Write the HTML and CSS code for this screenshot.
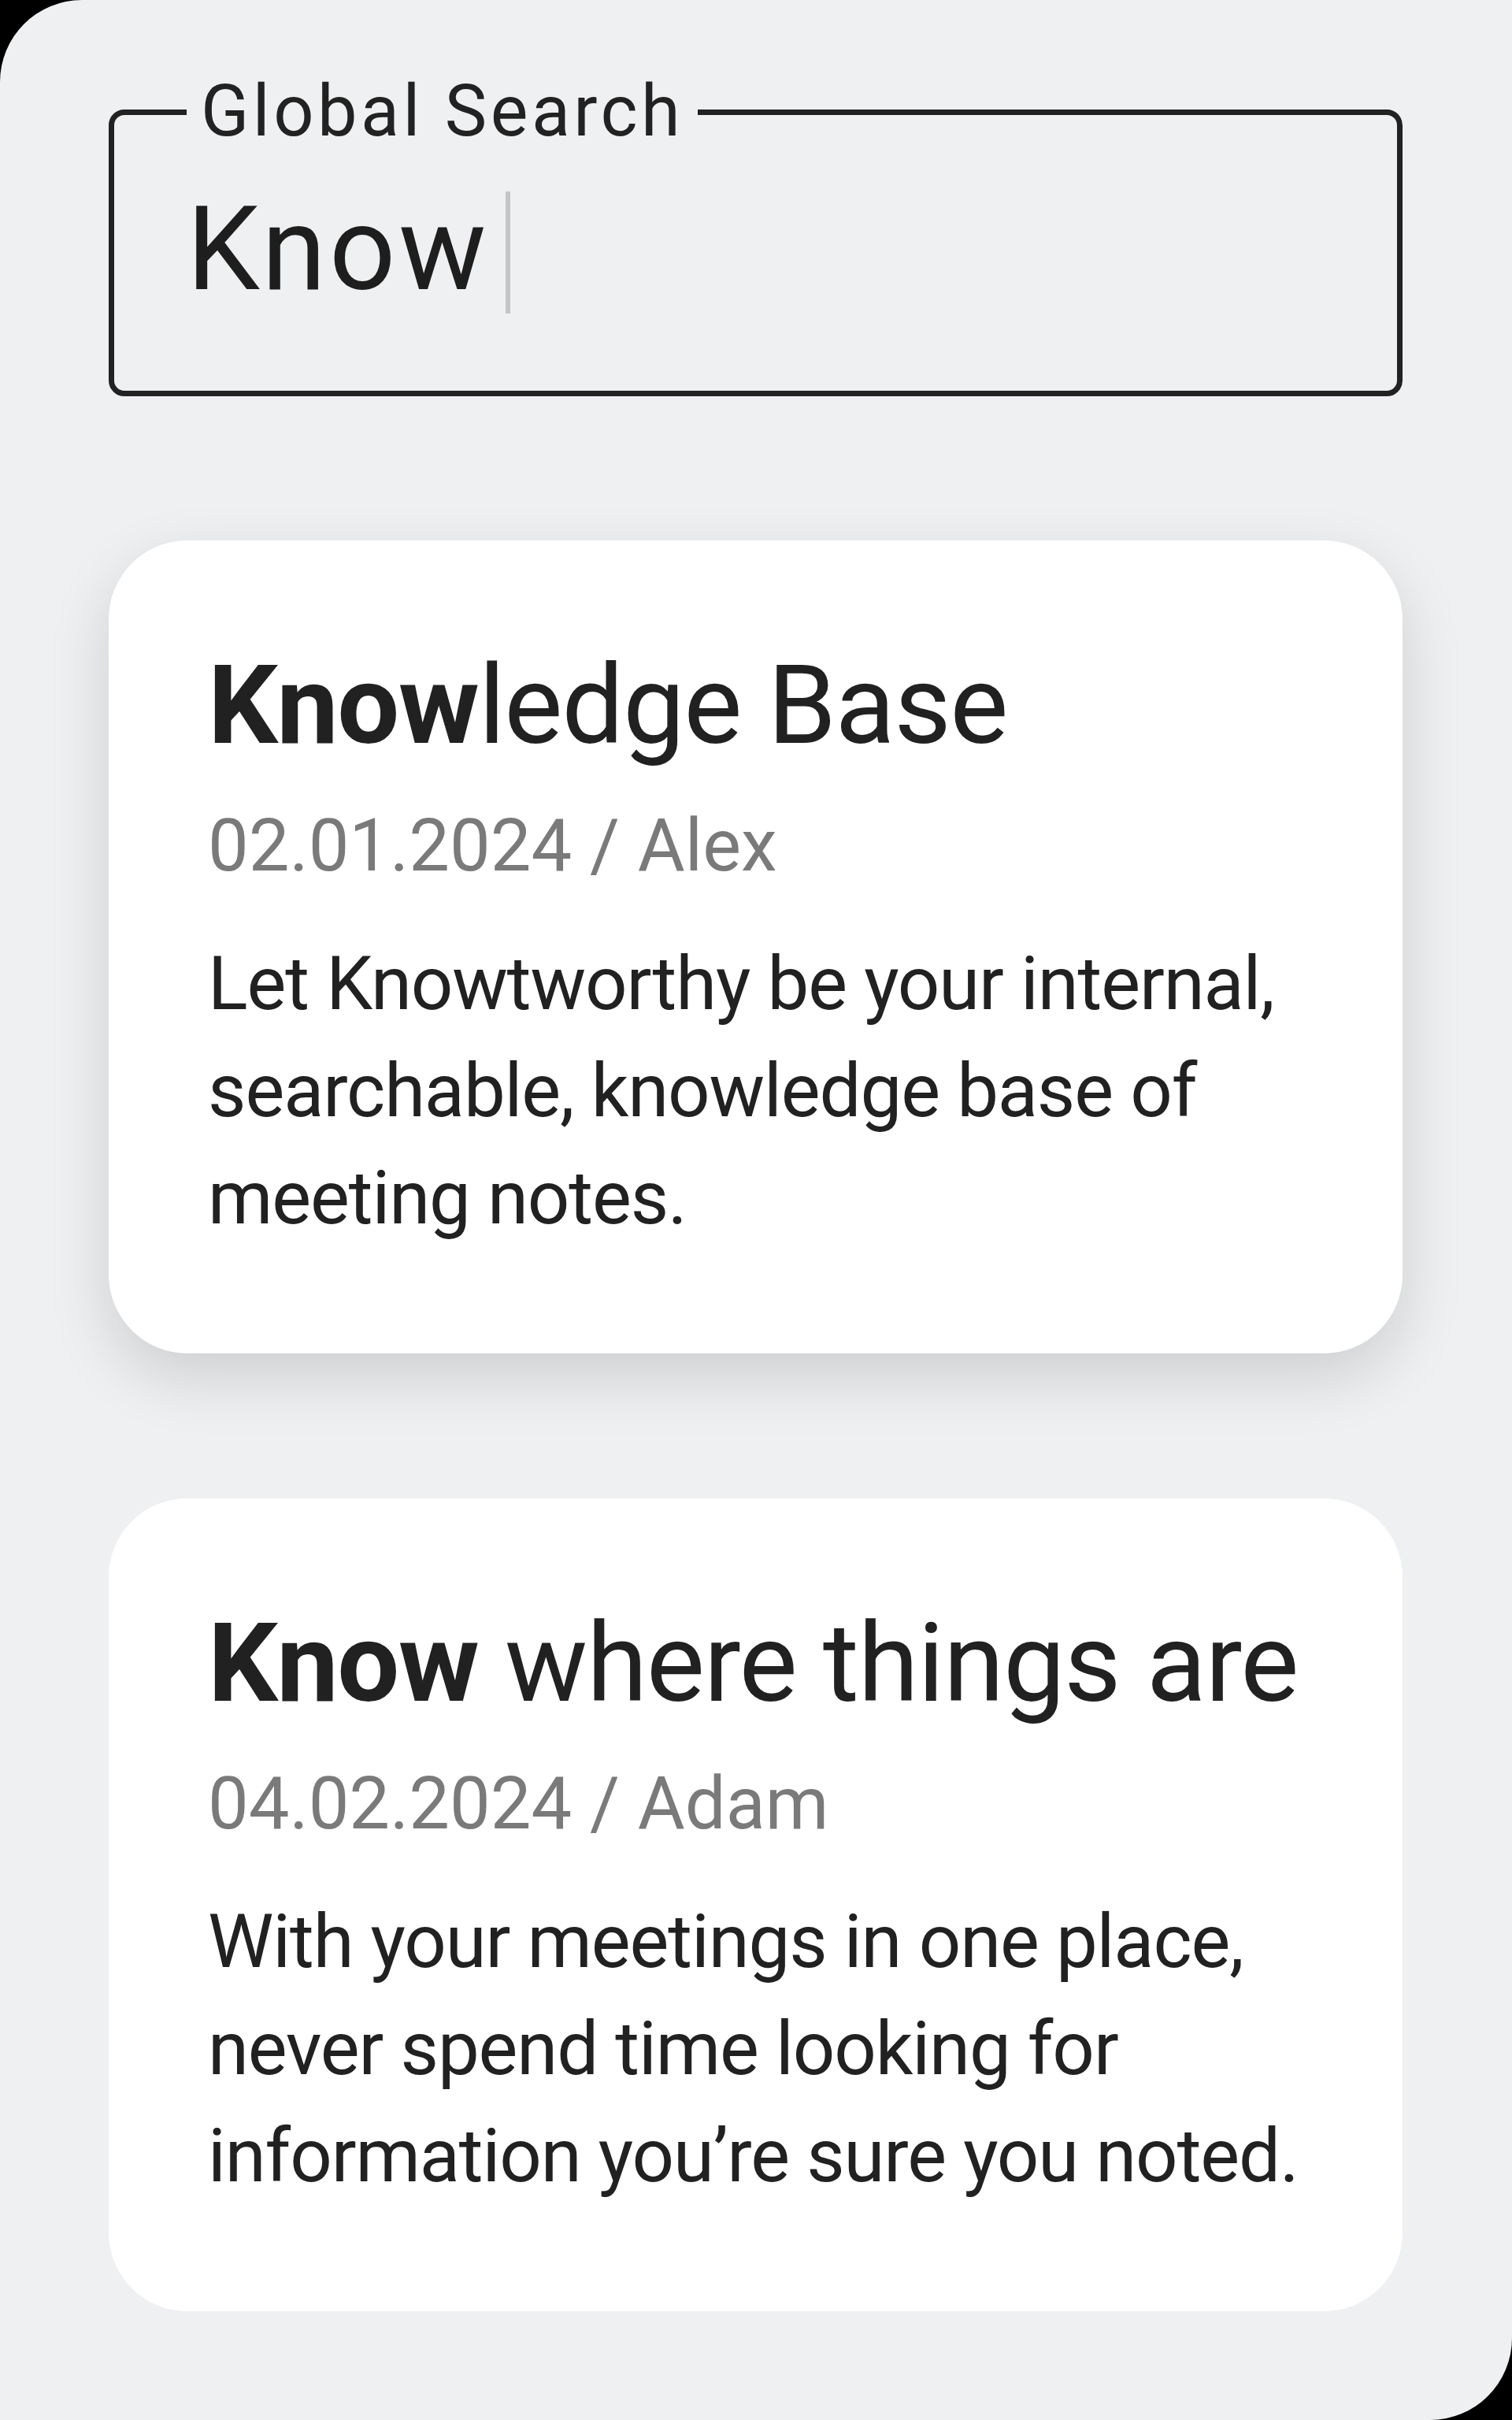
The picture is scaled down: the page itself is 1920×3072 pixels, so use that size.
FILE: index.html
```html
<!DOCTYPE html>
<html lang="en">
<head>
    <meta charset="UTF-8">
    <meta name="viewport" content="width=device-width, initial-scale=1.0">
    <title>Global Search</title>
    <link rel="stylesheet" href="styles.css">
</head>
<body>
    <div class="screen">
        <fieldset class="search">
            <legend>Global Search</legend>
            <div class="search-value">Know<span class="caret"></span></div>
        </fieldset>

        <div class="results">
            <div class="card card-raised">
                <h2 class="card-title"><b>Know</b>ledge Base</h2>
                <div class="card-meta">02.01.2024 / Alex</div>
                <p class="card-text">Let Knowtworthy be your internal,<br>searchable, knowledge base of<br>meeting notes.</p>
            </div>

            <div class="card">
                <h2 class="card-title"><b>Know</b> where things are</h2>
                <div class="card-meta">04.02.2024 / Adam</div>
                <p class="card-text">With your meetings in one place,<br>never spend time looking for<br>information you’re sure you noted.</p>
            </div>
        </div>
    </div>
</body>
</html>
```

FILE: styles.css
```css
body {
    margin: 0;
    background: #000;
    font-family: Roboto, "Liberation Sans", sans-serif;
    color: #212121;
}

.screen {
    min-height: 100vh;
    box-sizing: border-box;
    padding: 89px 139px 0 138px;
    background: #eff0f2;
    border-radius: 104px 0 104px 0;
}

/* search field */
.search {
    margin: 0;
    padding: 35px 90px 93px 92px;
    border: 7px solid #222;
    border-radius: 20px;
}

.search legend {
    padding: 0 18px;
    font-size: 90px;
    line-height: 106px;
    letter-spacing: 4.5px;
    color: #222;
}

.search-value {
    font-size: 148px;
    line-height: 173px;
    letter-spacing: 4px;
    color: #1e1e1e;
}

.caret {
    display: inline-block;
    width: 6px;
    height: 155px;
    margin-left: 20px;
    vertical-align: -31px;
    background: #c5c5c5;
}

/* result cards */
.results {
    display: flex;
    flex-direction: column;
    gap: 184px;
    margin-top: 183px;
}

.card {
    padding: 125px 96px 129px 126px;
    background: #fff;
    border-radius: 100px;
}

.card-raised {
    box-shadow: 0 30px 80px rgba(0, 0, 0, 0.14);
}

.card-title {
    margin: 0;
    font-size: 140px;
    line-height: 168px;
    font-weight: 400;
    letter-spacing: -1.3px;
    white-space: nowrap;
}

.card-title b {
    font-weight: 700;
}

.card-meta {
    margin-top: 31px;
    font-size: 92px;
    line-height: 128px;
    color: #7a7a7a;
}

.card-text {
    margin: 43px 0 0;
    font-size: 94px;
    line-height: 136px;
    letter-spacing: -1.1px;
}
```
